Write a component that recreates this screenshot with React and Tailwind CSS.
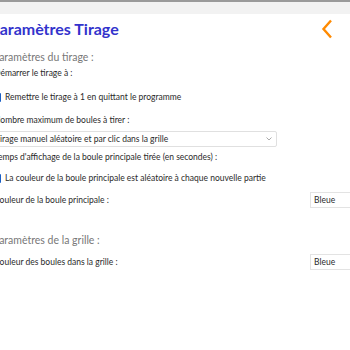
import React from "react";

function Chevron() {
  return (
    <svg width="12" height="20" viewBox="0 0 12 20" className="block">
      <polyline points="10,1.5 2.5,10 10,18.5" fill="none" stroke="#ff8a00" strokeWidth="2.4" />
    </svg>
  );
}

function Check() {
  return <span className="inline-block w-[8px] h-[9px] bg-[#1a5fc4] rounded-[1px] shrink-0"></span>;
}

function Row({ className = "", children }) {
  return <div className={"h-[14px] flex items-center leading-none whitespace-nowrap " + className}>{children}</div>;
}

export default function App() {
  return (
    <div className="w-[350px] h-[350px] bg-white overflow-hidden" style={{ fontFamily: 'Lato, sans-serif' }}>
      <div className="h-[2px] bg-[#9a9a9a]"></div>
      <div className="h-[12px] bg-[#f2f2f2]"></div>
      <div className="flex items-center justify-between h-[30px]">
        <div className="ml-[-10px] text-[16px] font-bold text-[#3333cc] leading-none whitespace-nowrap">Paramètres Tirage</div>
        <div className="mr-[17px]"><Chevron /></div>
      </div>
      <div className="ml-[-6px] text-[#2a2a2a] text-[8.5px]">
        <Row className="mt-[6px] text-[10.5px] text-[#777] ml-[-1px]">Paramètres du tirage :</Row>
        <Row className="mt-[2px]">Démarrer le tirage à :</Row>
        <Row className="mt-[10px] gap-[4px] ml-[-1px]"><Check /><span>Remettre le tirage à 1 en quittant le programme</span></Row>
        <Row className="mt-[9px]">Nombre maximum de boules à tirer :</Row>
        <div className="mt-[4px] ml-[-3px] w-[286px] h-[16px] border border-[#e0e0e0] rounded-[2px] flex items-center justify-between pl-[3px] pr-[4px] leading-none whitespace-nowrap">
          <span>Tirage manuel aléatoire et par clic dans la grille</span>
          <svg width="6" height="4" viewBox="0 0 6 4"><polyline points="0.5,0.5 3,3 5.5,0.5" fill="none" stroke="#aaa" strokeWidth="1" /></svg>
        </div>
        <Row className="mt-[3px]">Temps d'affichage de la boule principale tirée (en secondes) :</Row>
        <Row className="mt-[7px] gap-[4px] ml-[-1px]"><Check /><span>La couleur de la boule principale est aléatoire à chaque nouvelle partie</span></Row>
        <div className="mt-[7px] h-[16px] flex items-center justify-between leading-none whitespace-nowrap">
          <span>Couleur de la boule principale :</span>
          <div className="w-[52px] h-[16px] border border-[#e3e3e3] flex items-center pl-[3px] mr-[-12px]">Bleue</div>
        </div>
        <Row className="mt-[25px] text-[10.5px] text-[#777] ml-[-1px]">Paramètres de la grille :</Row>
        <div className="mt-[7px] h-[16px] flex items-center justify-between leading-none whitespace-nowrap">
          <span>Couleur des boules dans la grille :</span>
          <div className="w-[52px] h-[16px] border border-[#e3e3e3] flex items-center pl-[3px] mr-[-12px]">Bleue</div>
        </div>
      </div>
    </div>
  );
}
